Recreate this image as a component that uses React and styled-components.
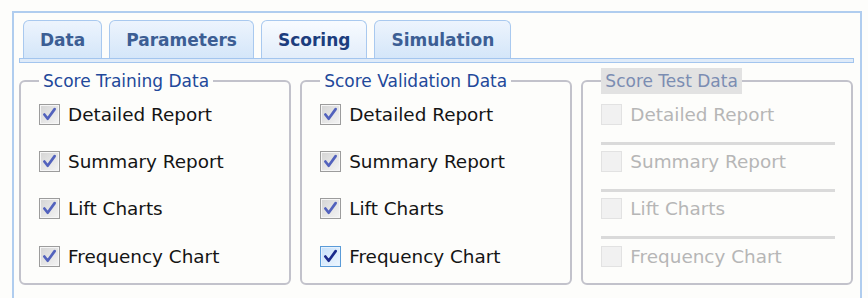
import React from "react";
import styled, { createGlobalStyle, css } from "styled-components";

const Global = createGlobalStyle`
  html, body { margin: 0; padding: 0; background: #fdfdfb; overflow: hidden; }
  body { font-family: "DejaVu Sans", Verdana, sans-serif; }
`;

const Panel = styled.div`
  box-sizing: border-box;
  width: 850px;
  height: 320px;
  margin: 11px 0 0 12px;
  border: 2px solid #b0cdef;
  border-bottom: none;
`;

const TabArea = styled.div`
  padding: 0 6px 0 5px;
`;

const TabRow = styled.div`
  display: flex;
  gap: 7px;
  margin-top: 7px;
  padding-left: 4px;
`;

const Tab = styled.div`
  box-sizing: border-box;
  height: 38px;
  padding: 0 16px;
  display: flex;
  align-items: center;
  border: 1.5px solid #a9c9ef;
  border-bottom: none;
  border-radius: 6px 6px 0 0;
  font-size: 17px;
  font-weight: bold;
  color: #3c5e94;
  background: linear-gradient(#edf4fd, #d4e6f9);
  ${(p) =>
    p.$active &&
    css`
      color: #1c3d7e;
      background: linear-gradient(#f8fbff, #e2edfa);
    `}
`;

const Band = styled.div`
  box-sizing: border-box;
  height: 5px;
  border: 1px solid #a3c5ee;
  background: #dfebf9;
`;

const Groups = styled.div`
  display: flex;
  gap: 9.5px;
  padding: 5px 7px 0 5px;
`;

const Group = styled.fieldset`
  flex: 1;
  box-sizing: border-box;
  margin: 0;
  height: 217px;
  padding: 0 0 0 18px;
  border: 2px solid #c2c2cb;
  border-radius: 6px;
  min-width: 0;
`;

const Legend = styled.legend`
  padding: 0 4px;
  font-size: 17px;
  line-height: 26px;
  color: #22489a;
  ${(p) =>
    p.$disabled &&
    css`
      background: #e2e2e2;
      color: #7b8db2;
    `}
`;

const List = styled.div`
  display: flex;
  flex-direction: column;
  padding-top: 10px;
`;

const Item = styled.label`
  display: flex;
  align-items: center;
  gap: 8px;
  height: 20px;
  font-size: 18.4px;
  color: ${(p) => (p.$disabled ? "#b6b6b6" : "#141414")};
  & + & {
    margin-top: 27.4px;
  }
`;

const Divider = styled.div`
  height: 3px;
  margin: 17.6px 16px 6.8px 0;
  background: #dadada;
`;

const Box = styled.span`
  box-sizing: border-box;
  width: 21px;
  height: 21px;
  flex: none;
  display: flex;
  align-items: center;
  justify-content: center;
  border: 1px solid #9c9c9c;
  background: linear-gradient(135deg, #d4d4d4, #f4f4f4);
  box-shadow: inset 0 0 0 1px #f6f6f6;
  ${(p) =>
    p.$focus &&
    css`
      border-color: #5a9bd8;
      background: linear-gradient(135deg, #c6e0fa, #eef6fe);
      box-shadow: inset 0 0 0 1px #e6f2fe;
    `}
  ${(p) =>
    p.$disabled &&
    css`
      border-color: #e2e2e2;
      background: #f1f1f1;
      box-shadow: none;
    `}
`;

const Check = ({ color }) => (
  <svg width="15" height="15" viewBox="0 0 14 14">
    <path
      d="M2.2 7 L5.3 11 L11.8 2"
      fill="none"
      stroke={color}
      strokeWidth="2.5"
      strokeLinecap="round"
      strokeLinejoin="round"
    />
  </svg>
);

const items = ["Detailed Report", "Summary Report", "Lift Charts", "Frequency Chart"];

function CheckItem({ text, checked, focus, disabled }) {
  return (
    <Item $disabled={disabled}>
      <Box $focus={focus} $disabled={disabled}>
        {checked && <Check color={focus ? "#1b2a8c" : "#5262bd"} />}
      </Box>
      {text}
    </Item>
  );
}

export default function App() {
  return (
    <>
      <Global />
      <Panel>
        <TabArea>
          <TabRow>
            <Tab>Data</Tab>
            <Tab>Parameters</Tab>
            <Tab $active>Scoring</Tab>
            <Tab>Simulation</Tab>
          </TabRow>
          <Band />
        </TabArea>
        <Groups>
          <Group>
            <Legend>Score Training Data</Legend>
            <List>
              {items.map((t) => (
                <CheckItem key={t} text={t} checked />
              ))}
            </List>
          </Group>
          <Group>
            <Legend>Score Validation Data</Legend>
            <List>
              {items.map((t, i) => (
                <CheckItem key={t} text={t} checked focus={i === 3} />
              ))}
            </List>
          </Group>
          <Group>
            <Legend $disabled>Score Test Data</Legend>
            <List>
              {items.map((t, i) => (
                <React.Fragment key={t}>
                  {i > 0 && <Divider />}
                  <CheckItem text={t} disabled />
                </React.Fragment>
              ))}
            </List>
          </Group>
        </Groups>
      </Panel>
    </>
  );
}
